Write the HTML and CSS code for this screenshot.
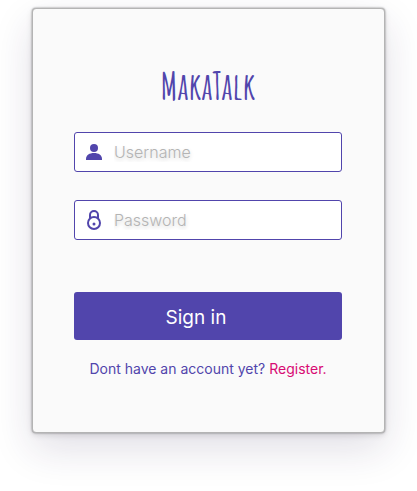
FILE: index.html
```html
<!DOCTYPE html>
<html lang="en">
<head>
<meta charset="utf-8">
<meta name="viewport" content="width=device-width, initial-scale=1">
<title>MakaTalk</title>
<link rel="stylesheet" href="styles.css">
</head>
<body>
<main class="card">
  <h1 class="brand">MakaTalk</h1>
  <form class="form">
    <label class="field">
      <svg class="icon" viewBox="0 0 20 20" aria-hidden="true">
        <circle cx="10" cy="6" r="4" fill="currentColor"/>
        <path d="M2 18v-1c0-4 3.500-6 8-6s8 2 8 6v1z" fill="currentColor"/>
      </svg>
      <input class="input" type="text" placeholder="Username" aria-label="Username">
    </label>
    <label class="field">
      <svg class="icon" viewBox="0 0 20 20" aria-hidden="true">
        <g fill="none" stroke="currentColor" stroke-width="2">
          <circle cx="10" cy="13" r="6"/>
          <path d="M6 9V5a4 4 0 0 1 8 0v4"/>
        </g>
        <circle cx="10" cy="14" r="1.500" fill="currentColor"/>
      </svg>
      <input class="input" type="password" placeholder="Password" aria-label="Password">
    </label>
    <button class="submit" type="button">Sign in</button>
  </form>
  <p class="signup">Dont have an account yet? <a class="link" href="#">Register.</a></p>
</main>
</body>
</html>
```
FILE: styles.css
```css
* {
  box-sizing: border-box;
}

body {
  margin: 0;
  padding: 8px 32px 56px;
  background: #fff;
  color: #5145ac;
  font-family: Inter, "Liberation Sans", sans-serif;
}

.card {
  max-width: 420px;
  margin: 0 auto;
  padding: 55px 42px 53px 41px;
  background: #fafafa;
  border: 1px solid #b4b4b4;
  border-radius: 4px;
  box-shadow: 0 0 2px rgba(0, 0, 0, 0.5), 0 2px 6px rgba(0, 0, 0, 0.12), 0 16px 40px rgba(40, 30, 80, 0.14);
}

.brand {
  margin: 0 0 24px;
  font-family: "Amatic SC", "Roboto Condensed", "Liberation Sans Narrow", sans-serif;
  font-size: 37px;
  font-weight: 700;
  line-height: 44px;
  text-align: center;
}

.form {
  display: flex;
  flex-direction: column;
}

.field {
  display: flex;
  align-items: center;
  height: 40px;
  margin-bottom: 28px;
  padding: 0 10px 0 9px;
  background: #fff;
  border: 1px solid #5145ac;
  border-radius: 3px;
}

.icon {
  flex: none;
  width: 20px;
  height: 20px;
  margin-right: 10px;
}

.input {
  flex: 1;
  min-width: 0;
  padding: 0;
  border: 0;
  outline: 0;
  background: transparent;
  color: #5145ac;
  font: 300 16px/24px Inter, "Liberation Sans", sans-serif;
}

.input::placeholder {
  color: #b4b4b4;
  text-shadow: 0 2px 4px rgba(0, 0, 0, 0.2);
}

.submit {
  height: 48px;
  margin-top: 24px;
  padding: 3px 24px 0 0;
  border: 0;
  border-radius: 3px;
  background: #5145ac;
  color: #fff;
  font: 19px/24px Inter, "Liberation Sans", sans-serif;
}

.signup {
  margin: 19px 0 0;
  font-size: 14px;
  line-height: 20px;
  text-align: center;
  white-space: nowrap;
}

.link {
  color: #d80b73;
  text-decoration: none;
}
```
